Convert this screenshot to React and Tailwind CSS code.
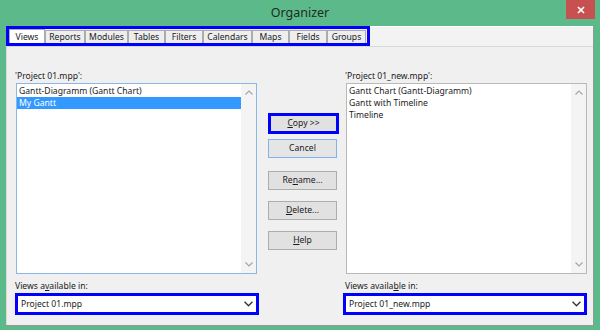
import React from "react";

const tabs = [
  { name: "Views", w: "w-[36px]", active: true },
  { name: "Reports", w: "w-[40px]" },
  { name: "Modules", w: "w-[43px]" },
  { name: "Tables", w: "w-[37px]" },
  { name: "Filters", w: "w-[38px]" },
  { name: "Calendars", w: "w-[49px]" },
  { name: "Maps", w: "w-[37px]" },
  { name: "Fields", w: "w-[38px]" },
  { name: "Groups", w: "w-[39px]" },
];

const Chevron = ({ up, color = "#a6a6a6", w = 8, h = 5 }) => (
  <svg width={w} height={h} viewBox="0 0 8 5">
    <polyline
      points={up ? "0.5,4.5 4,1 7.5,4.5" : "0.5,0.5 4,4 7.5,0.5"}
      fill="none"
      stroke={color}
      strokeWidth="1.2"
    />
  </svg>
);

const ListBox = ({ items, selected, border }) => (
  <div className={`flex h-[191px] w-[241px] border bg-white ${border}`}>
    <div className="flex-1 pt-px">
      {items.map((it, i) => (
        <div
          key={it}
          className={`h-[12px] pl-[2px] leading-[12px] ${
            i === selected ? "bg-[#3399ff] text-white" : "text-[#1a1a1a]"
          }`}
        >
          {it}
        </div>
      ))}
    </div>
    <div className="flex w-[15px] flex-col items-center justify-between bg-[#f4f4f4] pt-[6px] pb-[6px]">
      <Chevron up />
      <Chevron />
    </div>
  </div>
);

const Combo = ({ value }) => (
  <div className="flex h-[22px] w-[244px] items-center justify-between border-[3px] border-[#0000ff] bg-white pl-[3px] pr-[3px] text-[#1a1a1a]">
    <span>{value}</span>
    <Chevron color="#333333" w={9} h={6} />
  </div>
);

const Button = ({ children, className = "" }) => (
  <button
    className={`flex h-[19px] w-[69px] items-center justify-center border bg-[#e1e1e1] text-[#1a1a1a] ${className}`}
  >
    {children}
  </button>
);

const App = () => {
  return (
    <div className="flex h-[330px] w-[600px] flex-col bg-[#5cba8a] font-['Noto_Sans',sans-serif] text-[8.6px]">
      <div className="relative flex h-[26px] items-center justify-center">
        <span className="text-[12.5px] text-[#1e2a24]">Organizer</span>
        <div className="absolute top-0 right-[5px] flex h-[19px] w-[29px] items-center justify-center bg-[#c75050]">
          <svg width="8" height="8" viewBox="0 0 8 8">
            <path d="M1 1 L7 7 M7 1 L1 7" stroke="#ffffff" strokeWidth="1.7" />
          </svg>
        </div>
      </div>

      <div className="ml-[6px] flex h-[300px] w-[588px] flex-col border-r border-b border-[#8e9a93] bg-[#f0f0f0]">
        <div className="flex h-[20px]">
          <div className="flex h-[20px] w-[364px] items-end border-[3px] border-[#0000ff] bg-[#f0f0f0]">
            {tabs.map((t) => (
              <div
                key={t.name}
                className={`flex items-center justify-center border border-b-0 border-[#acacac] ${t.w} ${
                  t.active ? "h-[14px] bg-white" : "h-[13px] bg-[#eeeeee]"
                } leading-[12px] text-[#1a1a1a]`}
              >
                {t.name}
              </div>
            ))}
          </div>
          <div className="flex-1 border-t border-[#ffffff] bg-[#f3f3f3]" />
        </div>

        <div className="flex flex-1 border-t border-l border-[#d9d9d9] pl-[8px]">
          <div className="flex w-[244px] flex-col pt-[22px]">
            <div className="h-[14px] leading-[14px] text-[#1a1a1a]">'Project 01.mpp':</div>
            <div className="ml-px">
              <ListBox
                items={["Gantt-Diagramm (Gantt Chart)", "My Gantt"]}
                selected={1}
                border="border-[#88b8e8]"
              />
            </div>
            <div className="mt-[5px] h-[14px] leading-[14px] text-[#1a1a1a]">
              Views a<span className="underline">v</span>ailable in:
            </div>
            <Combo value="Project 01.mpp" />
          </div>

          <div className="flex w-[84px] flex-col pt-[66px] pl-[9px]">
            <button className="flex h-[21px] w-[71px] items-center justify-center border-[3px] border-[#0000ff] bg-[#e1e1e1] text-[#1a1a1a]">
              <span>
                <span className="underline">C</span>opy &gt;&gt;
              </span>
            </button>
            <Button className="mt-[5px] border-[#7eb4ea] bg-[#e5e5e5]">Cancel</Button>
            <Button className="mt-[13px] border-[#adadad]">
              <span>
                Re<span className="underline">n</span>ame...
              </span>
            </Button>
            <Button className="mt-[11px] border-[#adadad]">
              <span>
                <span className="underline">D</span>elete...
              </span>
            </Button>
            <Button className="mt-[11px] border-[#adadad]">
              <span>
                <span className="underline">H</span>elp
              </span>
            </Button>
          </div>

          <div className="flex w-[244px] flex-col pt-[22px]">
            <div className="h-[14px] pl-[2px] leading-[14px] text-[#1a1a1a]">'Project 01_new.mpp':</div>
            <div className="ml-[3px]">
              <ListBox
                items={["Gantt Chart (Gantt-Diagramm)", "Gantt with Timeline", "Timeline"]}
                selected={-1}
                border="border-[#b9b9b9]"
              />
            </div>
            <div className="mt-[5px] h-[14px] pl-[2px] leading-[14px] text-[#1a1a1a]">
              Views availa<span className="underline">b</span>le in:
            </div>
            <Combo value="Project 01_new.mpp" />
          </div>
        </div>
      </div>
    </div>
  );
};

export default App;
